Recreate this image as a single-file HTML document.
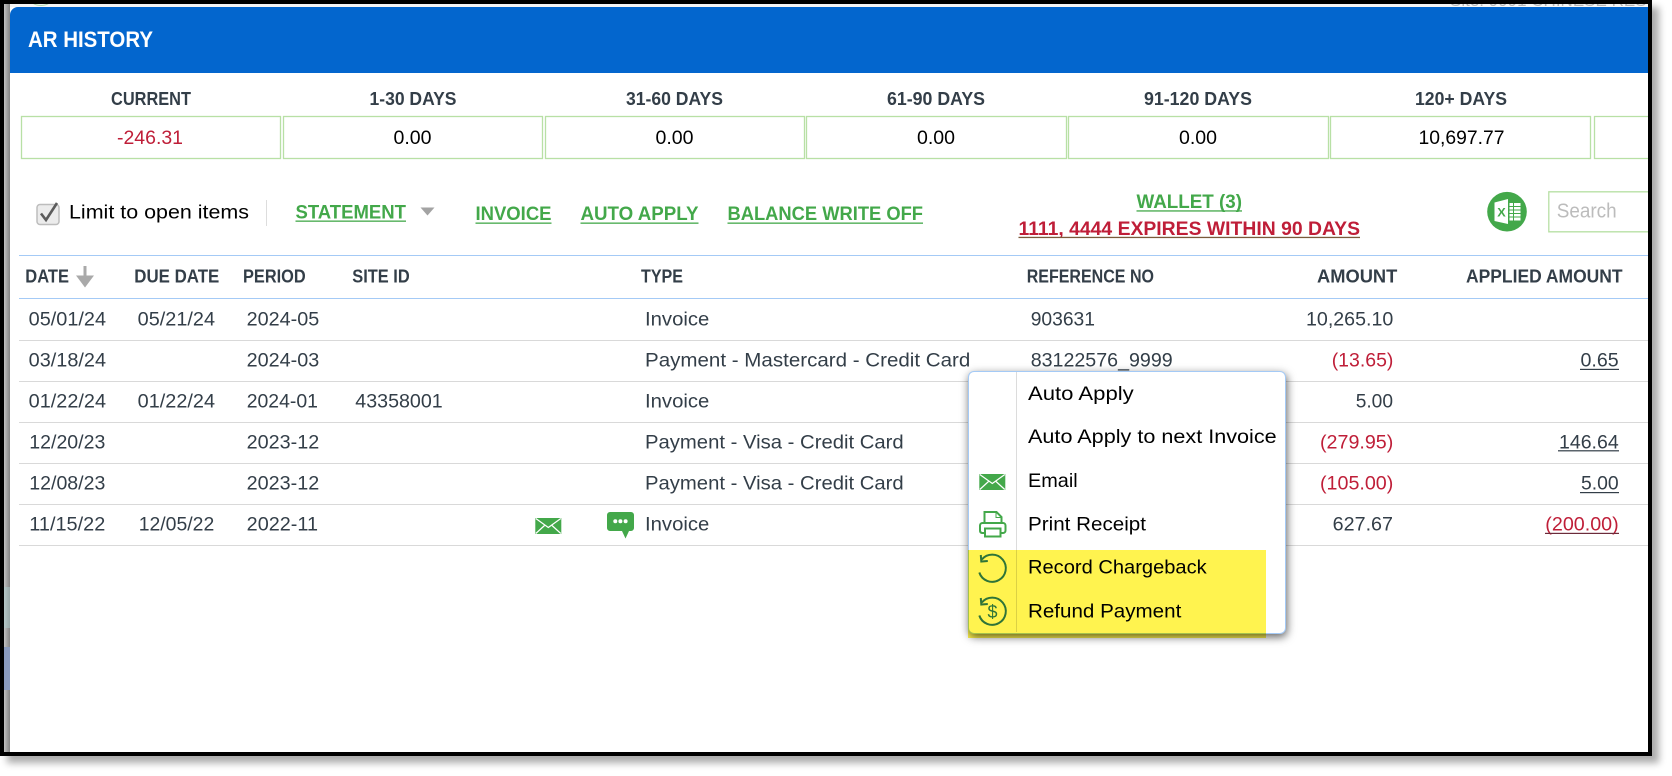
<!DOCTYPE html>
<html><head><meta charset="utf-8"><title>AR History</title>
<style>
html,body{margin:0;padding:0;background:#fff;width:1672px;height:776px;overflow:hidden}
body{position:relative;font-family:"Liberation Sans",sans-serif}
.a{position:absolute}
svg{position:absolute;left:0;top:0}
svg text{font-family:"Liberation Sans",sans-serif}
.t{font-size:19.5px;fill:#333e48}
.r{font-size:19.5px;fill:#bf1e38}
.k{font-size:19.5px;fill:#000}
.h{font-size:18.5px;font-weight:bold;fill:#333e48}
.g{font-size:19.5px;font-weight:bold;fill:#43a84a}
</style></head><body>
<div class="a" style="left:0;top:0;width:1644px;height:748px;border:4px solid #000;background:#fff;box-shadow:7px 7px 7px rgba(0,0,0,.33)"></div>
<div class="a" style="left:4px;top:4px;width:6px;height:748px;background:linear-gradient(to right,#c2c2c2,#858585)"></div>
<div class="a" style="left:4px;top:587px;width:6px;height:41px;background:linear-gradient(to right,#b5c8c8,#98a8a8)"></div>
<div class="a" style="left:4px;top:647px;width:6px;height:43px;background:#8a9bbe"></div>
<div class="a" style="left:10px;top:4px;width:1638px;height:3px;background:#f6f6f6;overflow:hidden">
<div class="a" style="left:20px;top:-12px;width:20px;height:12px;border:1.5px solid #b8dcb0;border-radius:50%"></div>
<div class="a" style="left:1440px;top:-12px;width:198px;font-size:17px;line-height:18px;color:#b5b5b5;white-space:nowrap">Site: 9991 CHINESE RES</div>
</div>
<div class="a" style="left:10px;top:7px;width:1638px;height:745px;background:#fff;border-radius:8px 0 0 0;overflow:hidden"><div style="height:66px;background:#0366ce"></div></div>

<svg width="1672" height="776" viewBox="0 0 1672 776">
<text x="28" y="47" textLength="125" lengthAdjust="spacingAndGlyphs" style="font-size:22px;font-weight:bold;fill:#fff">AR HISTORY</text>

<!-- aging labels -->
<text class="h" x="111" y="105" textLength="80" lengthAdjust="spacingAndGlyphs">CURRENT</text>
<text class="h" x="369.5" y="105" textLength="87" lengthAdjust="spacingAndGlyphs">1-30 DAYS</text>
<text class="h" x="626" y="105" textLength="97" lengthAdjust="spacingAndGlyphs">31-60 DAYS</text>
<text class="h" x="887" y="105" textLength="98" lengthAdjust="spacingAndGlyphs">61-90 DAYS</text>
<text class="h" x="1144" y="105" textLength="108" lengthAdjust="spacingAndGlyphs">91-120 DAYS</text>
<text class="h" x="1415" y="105" textLength="92" lengthAdjust="spacingAndGlyphs">120+ DAYS</text>

<!-- aging boxes -->
<g fill="none" stroke="#b8e0a5" stroke-width="1.3">
<rect x="21.5" y="116.5" width="259" height="42"/>
<rect x="283.5" y="116.5" width="259" height="42"/>
<rect x="545.5" y="116.5" width="259" height="42"/>
<rect x="806.5" y="116.5" width="260" height="42"/>
<rect x="1068.5" y="116.5" width="260" height="42"/>
<rect x="1330.5" y="116.5" width="260" height="42"/>
<path d="M1648 116.5H1594.5V158.5H1648"/>
</g>
<text class="r" x="117" y="144" textLength="66" lengthAdjust="spacingAndGlyphs">-246.31</text>
<text class="k" x="393.5" y="144" textLength="38" lengthAdjust="spacingAndGlyphs">0.00</text>
<text class="k" x="655.5" y="144" textLength="38" lengthAdjust="spacingAndGlyphs">0.00</text>
<text class="k" x="917" y="144" textLength="38" lengthAdjust="spacingAndGlyphs">0.00</text>
<text class="k" x="1179" y="144" textLength="38" lengthAdjust="spacingAndGlyphs">0.00</text>
<text class="k" x="1418.5" y="144" textLength="86" lengthAdjust="spacingAndGlyphs">10,697.77</text>

<!-- toolbar -->
<rect x="37" y="204.5" width="22" height="20" rx="3" fill="#ececec" stroke="#bdbdbd" stroke-width="1.5"/>
<path d="M41 213.5L46 220L57 203" fill="none" stroke="#5c5c5c" stroke-width="2.6"/>
<text class="k" x="69" y="218.5" textLength="180" lengthAdjust="spacingAndGlyphs">Limit to open items</text>
<rect x="266" y="200" width="1" height="26" fill="#ddd"/>
<text class="g" x="295.5" y="218.5" textLength="110.5" lengthAdjust="spacingAndGlyphs">STATEMENT</text>
<rect x="295.5" y="220.5" width="110.5" height="1.3" fill="#43a84a"/>
<path d="M420.5 207.5H434.5L427.5 215.5Z" fill="#a3a3a3"/>
<text class="g" x="475.5" y="220" textLength="76" lengthAdjust="spacingAndGlyphs">INVOICE</text>
<rect x="475.5" y="222.5" width="76" height="1.3" fill="#43a84a"/>
<text class="g" x="580.5" y="220" textLength="118" lengthAdjust="spacingAndGlyphs">AUTO APPLY</text>
<rect x="580.5" y="222.5" width="118" height="1.3" fill="#43a84a"/>
<text class="g" x="727.5" y="220" textLength="195.5" lengthAdjust="spacingAndGlyphs">BALANCE WRITE OFF</text>
<rect x="727.5" y="222.5" width="195.5" height="1.3" fill="#43a84a"/>
<text class="g" x="1136.5" y="208" textLength="105.5" lengthAdjust="spacingAndGlyphs">WALLET (3)</text>
<rect x="1136.5" y="210.3" width="105.5" height="1.3" fill="#43a84a"/>
<text x="1018.5" y="235" textLength="341.5" lengthAdjust="spacingAndGlyphs" style="font-size:19.5px;font-weight:bold;fill:#bf1e38">1111, 4444 EXPIRES WITHIN 90 DAYS</text>
<rect x="1018.5" y="236.8" width="341.5" height="1.3" fill="#7a5a3a"/>

<!-- excel icon -->
<circle cx="1507" cy="211.7" r="19.8" fill="#43a84a"/>
<path d="M1494.5 202.5L1508 199V224L1494.5 221Z" fill="#fff"/>
<text x="1497.3" y="216.5" textLength="8.5" lengthAdjust="spacingAndGlyphs" style="font-size:12px;font-weight:bold;fill:#43a84a">X</text>
<rect x="1509.5" y="203" width="11" height="17.5" fill="#fff"/>
<path d="M1509.5 206.5H1520.5M1509.5 210H1520.5M1509.5 213.5H1520.5M1509.5 217H1520.5M1513.5 203V220.5" stroke="#43a84a" stroke-width="1" fill="none"/>

<!-- search -->
<path d="M1648 191.8H1548.8V231.8H1648" fill="#fff" stroke="#b8e0a5" stroke-width="1.3"/>
<text x="1556.7" y="217.5" textLength="60" lengthAdjust="spacingAndGlyphs" style="font-size:20px;fill:#bcbcbc">Search</text>

<!-- table lines -->
<rect x="19" y="255" width="1629" height="1" fill="#a4caf6"/>
<rect x="19" y="298" width="1629" height="1" fill="#a4caf6"/>
<g fill="#d9d9d9">
<rect x="19" y="340" width="1629" height="1"/>
<rect x="19" y="381" width="1629" height="1"/>
<rect x="19" y="422" width="1629" height="1"/>
<rect x="19" y="463" width="1629" height="1"/>
<rect x="19" y="504" width="1629" height="1"/>
<rect x="19" y="545" width="1629" height="1"/>
</g>

<!-- table header -->
<text class="h" x="25.3" y="282.5" textLength="43.7" lengthAdjust="spacingAndGlyphs">DATE</text>
<path d="M85 266V282M79 277L85 285L91 277Z" fill="#a9a9a9" stroke="#a9a9a9" stroke-width="3"/>
<text class="h" x="134.3" y="282.5" textLength="85" lengthAdjust="spacingAndGlyphs">DUE DATE</text>
<text class="h" x="243" y="282.5" textLength="62.7" lengthAdjust="spacingAndGlyphs">PERIOD</text>
<text class="h" x="352.3" y="282.5" textLength="57.4" lengthAdjust="spacingAndGlyphs">SITE ID</text>
<text class="h" x="641" y="282.5" textLength="42" lengthAdjust="spacingAndGlyphs">TYPE</text>
<text class="h" x="1026.7" y="282.5" textLength="127.3" lengthAdjust="spacingAndGlyphs">REFERENCE NO</text>
<text class="h" x="1317" y="282.5" textLength="80.3" lengthAdjust="spacingAndGlyphs">AMOUNT</text>
<text class="h" x="1466" y="282.5" textLength="156.6" lengthAdjust="spacingAndGlyphs">APPLIED AMOUNT</text>

<!-- row 1 -->
<text class="t" x="28.7" y="325.5" textLength="77.3" lengthAdjust="spacingAndGlyphs">05/01/24</text>
<text class="t" x="137.7" y="325.5" textLength="77.3" lengthAdjust="spacingAndGlyphs">05/21/24</text>
<text class="t" x="246.7" y="325.5" textLength="72.6" lengthAdjust="spacingAndGlyphs">2024-05</text>
<text class="t" x="645" y="325.5" textLength="64.3" lengthAdjust="spacingAndGlyphs">Invoice</text>
<text class="t" x="1030.7" y="325.5" textLength="64.3" lengthAdjust="spacingAndGlyphs">903631</text>
<text class="t" x="1306" y="325.5" textLength="87.3" lengthAdjust="spacingAndGlyphs">10,265.10</text>
<!-- row 2 -->
<text class="t" x="28.7" y="366.5" textLength="77.3" lengthAdjust="spacingAndGlyphs">03/18/24</text>
<text class="t" x="246.7" y="366.5" textLength="72.6" lengthAdjust="spacingAndGlyphs">2024-03</text>
<text class="t" x="645" y="366.5" textLength="325.3" lengthAdjust="spacingAndGlyphs">Payment - Mastercard - Credit Card</text>
<text class="t" x="1030.7" y="366.5" textLength="142" lengthAdjust="spacingAndGlyphs">83122576_9999</text>
<text class="r" x="1331.7" y="366.5" textLength="61.7" lengthAdjust="spacingAndGlyphs">(13.65)</text>
<text class="t" x="1580.5" y="366.5" textLength="38.2" lengthAdjust="spacingAndGlyphs">0.65</text>
<rect x="1580" y="368.8" width="39" height="1.2" fill="#333e48"/>
<!-- row 3 -->
<text class="t" x="28.7" y="407.5" textLength="77.3" lengthAdjust="spacingAndGlyphs">01/22/24</text>
<text class="t" x="137.7" y="407.5" textLength="77.3" lengthAdjust="spacingAndGlyphs">01/22/24</text>
<text class="t" x="246.7" y="407.5" textLength="71.3" lengthAdjust="spacingAndGlyphs">2024-01</text>
<text class="t" x="355.3" y="407.5" textLength="87.4" lengthAdjust="spacingAndGlyphs">43358001</text>
<text class="t" x="645" y="407.5" textLength="64.3" lengthAdjust="spacingAndGlyphs">Invoice</text>
<text class="t" x="1355.7" y="407.5" textLength="37.3" lengthAdjust="spacingAndGlyphs">5.00</text>
<!-- row 4 -->
<text class="t" x="29.3" y="448.5" textLength="76" lengthAdjust="spacingAndGlyphs">12/20/23</text>
<text class="t" x="246.7" y="448.5" textLength="72.6" lengthAdjust="spacingAndGlyphs">2023-12</text>
<text class="t" x="645" y="448.5" textLength="258.7" lengthAdjust="spacingAndGlyphs">Payment - Visa - Credit Card</text>
<text class="r" x="1320" y="448.5" textLength="73.3" lengthAdjust="spacingAndGlyphs">(279.95)</text>
<text class="t" x="1559" y="448.5" textLength="59.7" lengthAdjust="spacingAndGlyphs">146.64</text>
<rect x="1558" y="450.2" width="61" height="1.2" fill="#333e48"/>
<!-- row 5 -->
<text class="t" x="29.3" y="489.5" textLength="76" lengthAdjust="spacingAndGlyphs">12/08/23</text>
<text class="t" x="246.7" y="489.5" textLength="72.6" lengthAdjust="spacingAndGlyphs">2023-12</text>
<text class="t" x="645" y="489.5" textLength="258.7" lengthAdjust="spacingAndGlyphs">Payment - Visa - Credit Card</text>
<text class="r" x="1320" y="489.5" textLength="73.3" lengthAdjust="spacingAndGlyphs">(105.00)</text>
<text class="t" x="1581" y="489.5" textLength="37.7" lengthAdjust="spacingAndGlyphs">5.00</text>
<rect x="1580" y="492" width="39" height="1.2" fill="#333e48"/>
<!-- row 6 -->
<text class="t" x="29.3" y="530.5" textLength="76" lengthAdjust="spacingAndGlyphs">11/15/22</text>
<text class="t" x="138.7" y="530.5" textLength="75.6" lengthAdjust="spacingAndGlyphs">12/05/22</text>
<text class="t" x="246.7" y="530.5" textLength="71.3" lengthAdjust="spacingAndGlyphs">2022-11</text>
<text class="t" x="645" y="530.5" textLength="64.3" lengthAdjust="spacingAndGlyphs">Invoice</text>
<text class="t" x="1332.7" y="530.5" textLength="60.3" lengthAdjust="spacingAndGlyphs">627.67</text>
<text class="r" x="1545.3" y="530.5" textLength="73.4" lengthAdjust="spacingAndGlyphs">(200.00)</text>
<rect x="1545" y="532.8" width="74" height="1.2" fill="#6b2b3a"/>

<!-- row icons -->
<rect x="535.3" y="518" width="26" height="16" fill="#43a84a"/>
<path d="M535.8 518.5L548.3 527.5L560.8 518.5M535.8 533.5L544.5 525.5M560.8 533.5L552 525.5" fill="none" stroke="#fff" stroke-width="1.2"/>
<path d="M610 512H631A3 3 0 0 1 634 515V528A3 3 0 0 1 631 531H629L625.5 538.5L622 531H610A3 3 0 0 1 607 528V515A3 3 0 0 1 610 512Z" fill="#43a84a"/>
<circle cx="615.3" cy="521.3" r="2" fill="#fff"/><circle cx="620.4" cy="521.3" r="2" fill="#fff"/><circle cx="625.6" cy="521.3" r="2" fill="#fff"/>
</svg>

<!-- context menu -->
<div class="a" style="left:968px;top:371px;width:316px;height:261px;background:#fff;border:1px solid #a4caf6;border-radius:6px;box-shadow:1px 3px 9px rgba(0,0,0,.62)"></div>
<div class="a" style="left:1016px;top:372px;width:1px;height:260px;background:#dcdcdc"></div>
<div class="a" style="left:968px;top:550px;width:298px;height:88px;background:#fff34f;mix-blend-mode:multiply"></div>

<svg width="1672" height="776" viewBox="0 0 1672 776">
<text class="k" x="1028" y="400" textLength="105.7" lengthAdjust="spacingAndGlyphs">Auto Apply</text>
<text class="k" x="1028" y="443" textLength="248.7" lengthAdjust="spacingAndGlyphs">Auto Apply to next Invoice</text>
<text class="k" x="1028" y="487" textLength="49.7" lengthAdjust="spacingAndGlyphs">Email</text>
<text class="k" x="1028" y="530.3" textLength="118" lengthAdjust="spacingAndGlyphs">Print Receipt</text>
<text class="k" x="1028" y="573.5" textLength="178.7" lengthAdjust="spacingAndGlyphs">Record Chargeback</text>
<text class="k" x="1028" y="617.5" textLength="153.3" lengthAdjust="spacingAndGlyphs">Refund Payment</text>

<!-- email -->
<rect x="979.3" y="474" width="26" height="16" fill="#43a84a"/>
<path d="M979.8 474.5L992.3 483.5L1004.8 474.5M979.8 489.5L988.5 481.5M1004.8 489.5L996 481.5" fill="none" stroke="#fff" stroke-width="1.2"/>
<!-- printer -->
<path d="M984.5 522V512H996.5L1001.5 517V522" fill="none" stroke="#43a84a" stroke-width="2"/>
<path d="M996 512V517.5H1001.5" fill="none" stroke="#43a84a" stroke-width="1"/>
<path d="M984 533H982A2.5 2.5 0 0 1 980 530.5V525.5A2.5 2.5 0 0 1 982.5 523H1003A2.5 2.5 0 0 1 1005.5 525.5V530.5A2.5 2.5 0 0 1 1003 533H1001" fill="none" stroke="#43a84a" stroke-width="2"/>
<rect x="985" y="528.5" width="15.5" height="8" fill="#fff" stroke="#43a84a" stroke-width="2"/>
<!-- chargeback -->
<path d="M981.8 559.5A13.6 13.6 0 1 1 979.3 572.5" fill="none" stroke="#2f7438" stroke-width="2"/>
<path d="M980.8 555L981.3 561.5L987.8 561" fill="none" stroke="#2f7438" stroke-width="2"/>
<!-- refund -->
<path d="M981.8 602.5A13.6 13.6 0 1 1 979.3 615.5" fill="none" stroke="#2f7438" stroke-width="2"/>
<path d="M980.8 598L981.3 604.5L987.8 604" fill="none" stroke="#2f7438" stroke-width="2"/>
<text x="987.5" y="618" textLength="10" lengthAdjust="spacingAndGlyphs" style="font-size:18px;fill:#2f7438">$</text>
</svg>
</body></html>
